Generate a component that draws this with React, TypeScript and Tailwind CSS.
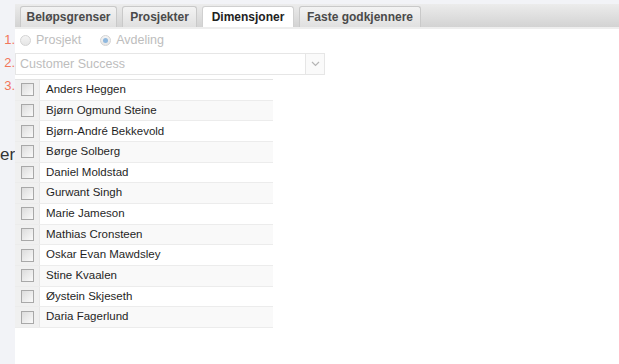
import React from 'react';

const names = [
  'Anders Heggen',
  'Bjørn Ogmund Steine',
  'Bjørn-André Bekkevold',
  'Børge Solberg',
  'Daniel Moldstad',
  'Gurwant Singh',
  'Marie Jameson',
  'Mathias Cronsteen',
  'Oskar Evan Mawdsley',
  'Stine Kvaalen',
  'Øystein Skjeseth',
  'Daria Fagerlund',
];

const tabs = [
  { label: 'Beløpsgrenser', w: 'w-[97px]' },
  { label: 'Prosjekter', w: 'w-[75px]' },
  { label: 'Dimensjoner', w: 'w-[92px]', active: true },
  { label: 'Faste godkjennere', w: 'w-[122px]' },
];

const Radio = ({ checked }: { checked?: boolean }) => (
  <span className="w-[11px] h-[11px] rounded-full border border-[#d4d4d4] bg-gradient-to-b from-[#f4f4f4] to-[#e6e6e6] flex items-center justify-center">
    {checked && <span className="w-[5px] h-[5px] rounded-full bg-[#8fb8de]" />}
  </span>
);

const Checkbox = () => (
  <span className="block w-[13px] h-[13px] border border-[#a8a8a8] bg-gradient-to-br from-[#dcdcdc] to-[#fafafa]" />
);

const Num = ({ n }: { n: string }) => (
  <span className="w-[15px] text-[13px] text-[#f2765a] text-right">{n}</span>
);

export default function App() {
  return (
    <div
      className="w-[619px] h-[364px] bg-[#f2f3f7] flex overflow-hidden"
      style={{ fontFamily: '"Liberation Sans", Arial, sans-serif' }}
    >
      <div className="w-[15px] shrink-0 flex flex-col">
        <div className="h-[147px]" />
        <span className="text-[17px] leading-[16px] text-[#333]">er</span>
      </div>
      <div className="flex-1 flex flex-col relative">
        <div className="h-[4px]" />
        <div className="h-[23px] bg-gradient-to-b from-[#ececec] to-[#d3d3d3] flex items-end gap-[5px] pl-[5px]">
          {tabs.map((t) => (
            <div
              key={t.label}
              className={`${t.w} h-[21px] rounded-t-[3px] border border-b-0 flex items-center justify-center text-[12px] font-bold ${
                t.active
                  ? 'bg-white border-[#d0d0d0] text-[#222]'
                  : 'bg-gradient-to-b from-[#f3f3f3] to-[#e0e0e0] border-[#c9c9c9] text-[#4a4a4a]'
              }`}
            >
              {t.label}
            </div>
          ))}
        </div>
        <div className="h-[2px] bg-[#eeeeee]" />
        <div className="flex-1 bg-white">
          <div className="h-[21px] flex items-center gap-[5px] pl-[5px] pt-[1px] text-[12.5px] text-[#bdbdbd]">
            <Radio />
            <span>Prosjekt</span>
            <span className="w-[9px]" />
            <Radio checked />
            <span>Avdeling</span>
          </div>
          <div className="mt-[3px] w-[310px] h-[22px] border border-[#e6e6e6] flex">
            <span className="flex-1 flex items-center pl-[4px] text-[12.5px] text-[#bdbdbd]">Customer Success</span>
            <span className="w-[19px] border-l border-[#e6e6e6] bg-[#fafafa] flex items-center justify-center">
              <svg width="9" height="6" viewBox="0 0 9 6">
                <path d="M1 1l3.5 3.5L8 1" fill="none" stroke="#b5b5b5" strokeWidth="1.2" />
              </svg>
            </span>
          </div>
          <div className="mt-[4px] w-[258px] border-t border-[#e3e3e3]">
            {names.map((n, i) => (
              <div
                key={n}
                className={`h-[20.67px] flex border-b border-[#ececec] ${i % 2 ? 'bg-[#f9f9f9]' : 'bg-white'}`}
              >
                <div className="w-[25px] bg-[#f0f0f0] border-r border-[#e6e6e6] flex items-center justify-center">
                  <Checkbox />
                </div>
                <div className="flex items-center pl-[6px] text-[11.5px] text-[#1f1f1f]">{n}</div>
              </div>
            ))}
          </div>
        </div>
        <div className="absolute left-[-15px] top-[33px] flex flex-col">
          <div className="h-[14px] flex items-center"><Num n="1." /></div>
          <div className="h-[9px]" />
          <div className="h-[14px] flex items-center"><Num n="2." /></div>
          <div className="h-[9px]" />
          <div className="h-[14px] flex items-center"><Num n="3." /></div>
        </div>
      </div>
    </div>
  );
}
